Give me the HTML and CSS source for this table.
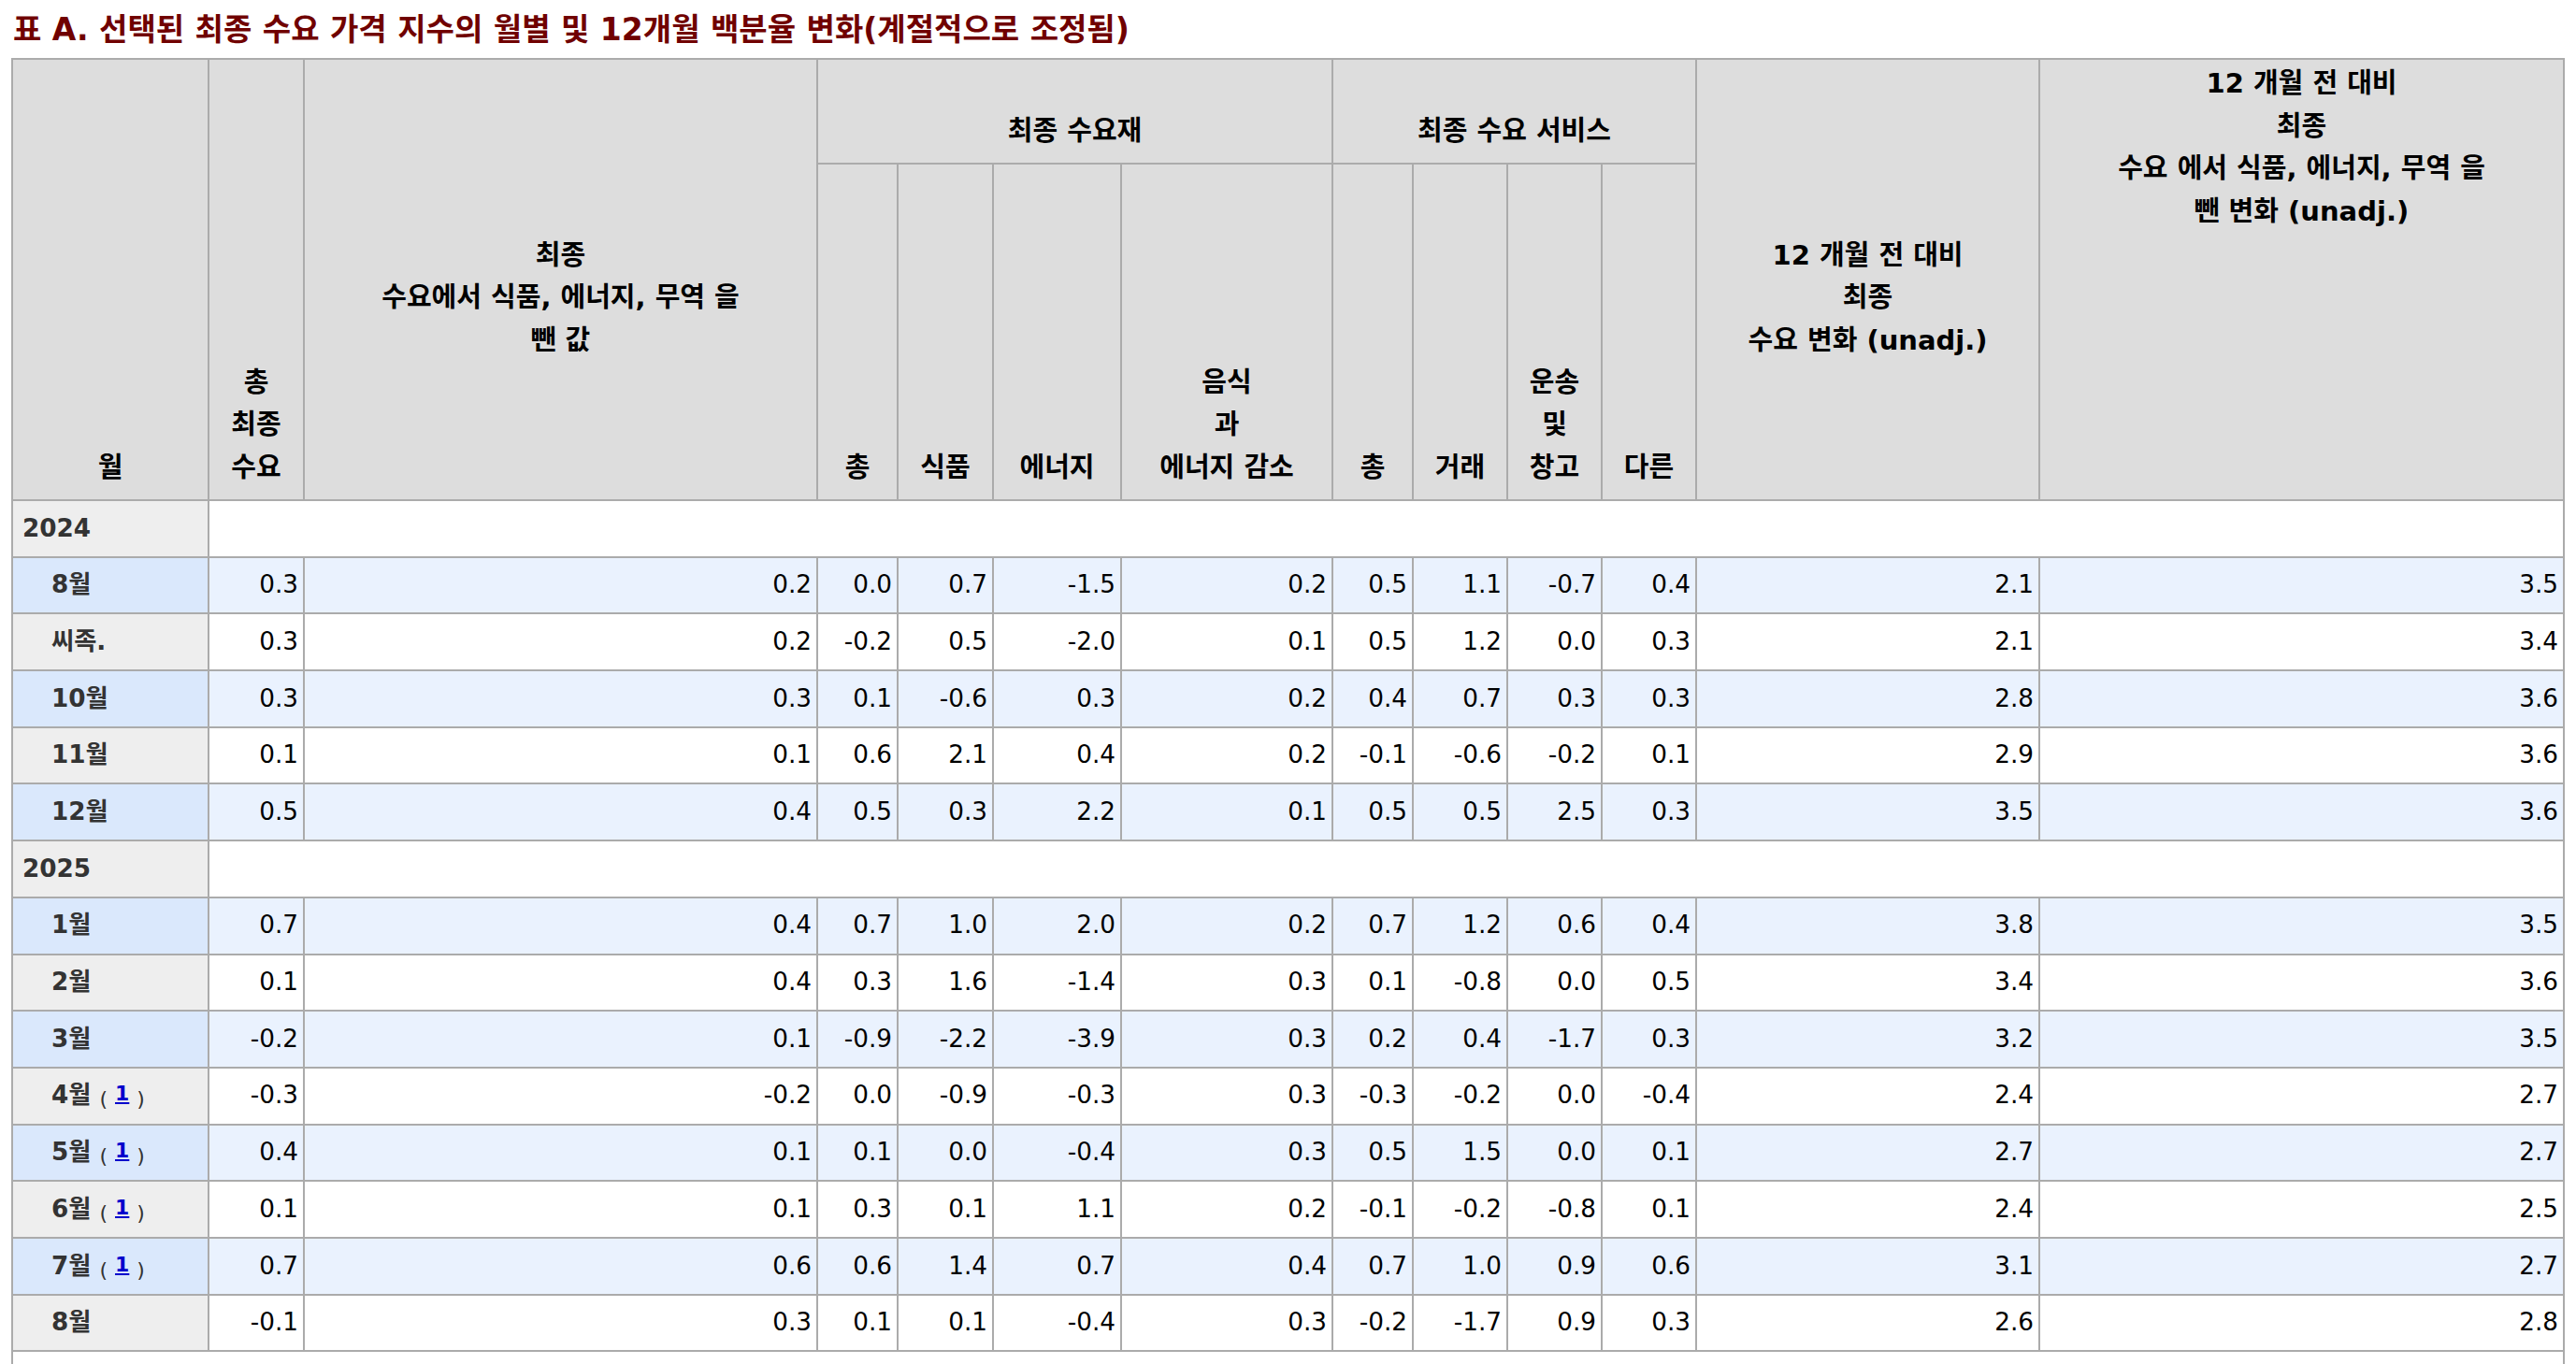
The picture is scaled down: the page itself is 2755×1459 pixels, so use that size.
FILE: index.html
```html
<!DOCTYPE html>
<html lang="ko">
<head>
<meta charset="utf-8">
<title>표 A</title>
<link rel="stylesheet" href="styles.css">
</head>
<body>
<div class="page">
<h2 class="title">표 A. 선택된 최종 수요 가격 지수의 월별 및 12개월 백분율 변화(계절적으로 조정됨)</h2>
<table class="ppi">
<colgroup>
<col class="c-month"><col class="c-total"><col class="c-core">
<col class="c-n1"><col class="c-n2"><col class="c-n3"><col class="c-n4">
<col class="c-n5"><col class="c-n6"><col class="c-n7"><col class="c-n8">
<col class="c-y1"><col class="c-y2">
</colgroup>
<thead>
<tr class="h1">
<th rowspan="2">월</th>
<th rowspan="2">총<br>최종<br>수요</th>
<th rowspan="2" class="lift3">최종<br>수요에서 식품, 에너지, 무역 을<br>뺀 값</th>
<th colspan="4">최종 수요재</th>
<th colspan="4">최종 수요 서비스</th>
<th rowspan="2" class="lift3">12 개월 전 대비<br>최종<br>수요 변화 (unadj.)</th>
<th rowspan="2" class="top">12 개월 전 대비<br>최종<br>수요 에서 식품, 에너지, 무역 을<br>뺀 변화 (unadj.)</th>
</tr>
<tr class="h2">
<th>총</th>
<th>식품</th>
<th>에너지</th>
<th>음식<br>과<br>에너지 감소</th>
<th>총</th>
<th>거래</th>
<th>운송<br>및<br>창고</th>
<th>다른</th>
</tr>
</thead>
<tbody>
<tr class="year"><th>2024</th><td colspan="12"></td></tr>
<tr class="odd"><th class="m">8월</th><td>0.3</td><td>0.2</td><td>0.0</td><td>0.7</td><td>-1.5</td><td>0.2</td><td>0.5</td><td>1.1</td><td>-0.7</td><td>0.4</td><td>2.1</td><td>3.5</td></tr>
<tr class="even"><th class="m">씨족.</th><td>0.3</td><td>0.2</td><td>-0.2</td><td>0.5</td><td>-2.0</td><td>0.1</td><td>0.5</td><td>1.2</td><td>0.0</td><td>0.3</td><td>2.1</td><td>3.4</td></tr>
<tr class="odd"><th class="m">10월</th><td>0.3</td><td>0.3</td><td>0.1</td><td>-0.6</td><td>0.3</td><td>0.2</td><td>0.4</td><td>0.7</td><td>0.3</td><td>0.3</td><td>2.8</td><td>3.6</td></tr>
<tr class="even"><th class="m">11월</th><td>0.1</td><td>0.1</td><td>0.6</td><td>2.1</td><td>0.4</td><td>0.2</td><td>-0.1</td><td>-0.6</td><td>-0.2</td><td>0.1</td><td>2.9</td><td>3.6</td></tr>
<tr class="odd"><th class="m">12월</th><td>0.5</td><td>0.4</td><td>0.5</td><td>0.3</td><td>2.2</td><td>0.1</td><td>0.5</td><td>0.5</td><td>2.5</td><td>0.3</td><td>3.5</td><td>3.6</td></tr>
<tr class="year"><th>2025</th><td colspan="12"></td></tr>
<tr class="odd"><th class="m">1월</th><td>0.7</td><td>0.4</td><td>0.7</td><td>1.0</td><td>2.0</td><td>0.2</td><td>0.7</td><td>1.2</td><td>0.6</td><td>0.4</td><td>3.8</td><td>3.5</td></tr>
<tr class="even"><th class="m">2월</th><td>0.1</td><td>0.4</td><td>0.3</td><td>1.6</td><td>-1.4</td><td>0.3</td><td>0.1</td><td>-0.8</td><td>0.0</td><td>0.5</td><td>3.4</td><td>3.6</td></tr>
<tr class="odd"><th class="m">3월</th><td>-0.2</td><td>0.1</td><td>-0.9</td><td>-2.2</td><td>-3.9</td><td>0.3</td><td>0.2</td><td>0.4</td><td>-1.7</td><td>0.3</td><td>3.2</td><td>3.5</td></tr>
<tr class="even"><th class="m">4월<span class="fn">(<a href="#fn1">1</a>)</span></th><td>-0.3</td><td>-0.2</td><td>0.0</td><td>-0.9</td><td>-0.3</td><td>0.3</td><td>-0.3</td><td>-0.2</td><td>0.0</td><td>-0.4</td><td>2.4</td><td>2.7</td></tr>
<tr class="odd"><th class="m">5월<span class="fn">(<a href="#fn1">1</a>)</span></th><td>0.4</td><td>0.1</td><td>0.1</td><td>0.0</td><td>-0.4</td><td>0.3</td><td>0.5</td><td>1.5</td><td>0.0</td><td>0.1</td><td>2.7</td><td>2.7</td></tr>
<tr class="even"><th class="m">6월<span class="fn">(<a href="#fn1">1</a>)</span></th><td>0.1</td><td>0.1</td><td>0.3</td><td>0.1</td><td>1.1</td><td>0.2</td><td>-0.1</td><td>-0.2</td><td>-0.8</td><td>0.1</td><td>2.4</td><td>2.5</td></tr>
<tr class="odd"><th class="m">7월<span class="fn">(<a href="#fn1">1</a>)</span></th><td>0.7</td><td>0.6</td><td>0.6</td><td>1.4</td><td>0.7</td><td>0.4</td><td>0.7</td><td>1.0</td><td>0.9</td><td>0.6</td><td>3.1</td><td>2.7</td></tr>
<tr class="even"><th class="m">8월</th><td>-0.1</td><td>0.3</td><td>0.1</td><td>0.1</td><td>-0.4</td><td>0.3</td><td>-0.2</td><td>-1.7</td><td>0.9</td><td>0.3</td><td>2.6</td><td>2.8</td></tr>
</tbody>
<tfoot>
<tr class="foot"><td colspan="13"></td></tr>
</tfoot>
</table>
</div>
</body>
</html>
```

FILE: styles.css
```css
html, body {
  margin: 0;
  padding: 0;
  background: #fff;
}

.page {
  padding: 12px 12px 20px 12px;
  font-family: "DejaVu Sans", Verdana, "Noto Sans CJK KR", sans-serif;
  font-size: 26.25px;
  color: #000;
}

.title {
  margin: 0 0 10px 2px;
  font-size: 33px;
  line-height: 40px;
  font-weight: bold;
  color: #700000;
}

.ppi {
  border-collapse: collapse;
  table-layout: fixed;
  width: 2730px;
}

.c-month { width: 210px; }
.c-total { width: 102px; }
.c-core { width: 549px; }
.c-n1 { width: 86px; }
.c-n2 { width: 102px; }
.c-n3 { width: 137px; }
.c-n4 { width: 226px; }
.c-n5 { width: 86px; }
.c-n6 { width: 101px; }
.c-n7 { width: 101px; }
.c-n8 { width: 101px; }
.c-y1 { width: 367px; }
.c-y2 { width: 561px; }

.ppi th,
.ppi td {
  border: 2px solid #ababab;
  line-height: 45.5px;
}

.ppi thead th {
  background: #dddddd;
  font-size: 29px;
  font-weight: bold;
  text-align: center;
  vertical-align: bottom;
  padding: 0 2px 11px 2px;
  white-space: nowrap;
}

.ppi thead tr.h1 { height: 112px; }
.ppi thead tr.h2 { height: 360px; }

.ppi thead th.lift3 { padding-bottom: 147px; }
.ppi thead th.top {
  vertical-align: top;
  padding-top: 3px;
}

.ppi tbody tr { height: 60.7px; }

.ppi tbody th {
  text-align: left;
  font-weight: bold;
  color: #333;
  padding: 6px 4px 6px 10px;
  white-space: nowrap;
}

.ppi tbody th.m { padding-left: 41px; }

.ppi tbody td {
  text-align: right;
  padding: 6px 5px;
  white-space: nowrap;
}

.ppi tr.year th { background: #eeeeee; }
.ppi tr.year td { background: #ffffff; }

.ppi tr.odd th { background: #dae8fc; }
.ppi tr.odd td { background: #eaf2fe; }

.ppi tr.even th { background: #eeeeee; }
.ppi tr.even td { background: #ffffff; }

.fn {
  font-weight: normal;
  font-size: 22px;
  line-height: 1;
  margin-left: 9px;
  position: relative;
  top: 3px;
}

.fn a {
  color: #0000cc;
  font-weight: bold;
  line-height: 1;
  text-decoration: underline;
  margin: 0 8px;
  position: relative;
  top: -6px;
}

.ppi tfoot td {
  height: 60px;
  background: #fff;
}
```
